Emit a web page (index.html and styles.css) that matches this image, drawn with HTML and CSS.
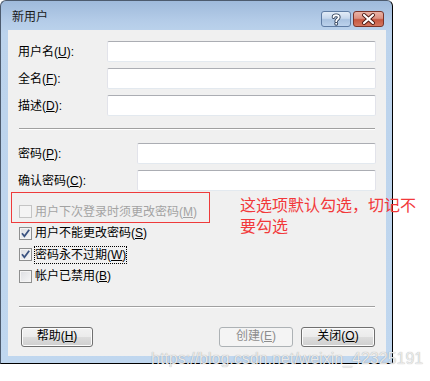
FILE: index.html
```html
<!DOCTYPE html>
<html lang="zh-CN">
<head>
    <meta charset="UTF-8">
    <title>新用户</title>
    <link rel="stylesheet" href="styles.css">
</head>
<body>
    <div class="page">
        <div class="window">
            <!-- Barra de título -->
            <div class="titlebar">
                <span class="title">新用户</span>
                <div class="caption-buttons">
                    <span class="cap-btn help">
                        <svg width="30" height="16" viewBox="0 0 30 16">
                            <path d="M12.5 6.2 C12.5 3.6 17.8 3.6 17.8 6.2 C17.8 8.2 15.2 8.2 15.2 10.2" fill="none" stroke="#2f3f58" stroke-width="3.6" stroke-linecap="round"/>
                            <circle cx="15.2" cy="12.8" r="1.9" fill="#2f3f58"/>
                            <path d="M12.5 6.2 C12.5 3.6 17.8 3.6 17.8 6.2 C17.8 8.2 15.2 8.2 15.2 10.2" fill="none" stroke="#fff" stroke-width="1.8" stroke-linecap="round"/>
                            <circle cx="15.2" cy="12.8" r="1" fill="#fff"/>
                        </svg>
                    </span>
                    <span class="cap-btn close">
                        <svg width="31" height="16" viewBox="0 0 31 16">
                            <path d="M11 4 L20 12 M20 4 L11 12" stroke="#4a1a14" stroke-width="4" stroke-linecap="round"/>
                            <path d="M11 4 L20 12 M20 4 L11 12" stroke="#fff" stroke-width="2.2" stroke-linecap="round"/>
                        </svg>
                    </span>
                </div>
            </div>

            <!-- Área do formulário -->
            <div class="client">
                <div class="field">
                    <label>用户名(<u>U</u>):</label>
                    <span class="input"></span>
                </div>
                <div class="field">
                    <label>全名(<u>F</u>):</label>
                    <span class="input"></span>
                </div>
                <div class="field">
                    <label>描述(<u>D</u>):</label>
                    <span class="input"></span>
                </div>

                <div class="sep"></div>

                <div class="field pw first">
                    <label>密码(<u>P</u>):</label>
                    <span class="input"></span>
                </div>
                <div class="field pw">
                    <label>确认密码(<u>C</u>):</label>
                    <span class="input"></span>
                </div>

                <div class="checks">
                    <div class="check disabled">
                        <span class="box"></span>
                        <span>用户下次登录时须更改密码(<u>M</u>)</span>
                    </div>
                    <div class="check">
                        <span class="box">
                            <svg width="11" height="11" viewBox="0 0 11 11"><path d="M2 5.2 L4.4 8.2 L9.2 1.8" fill="none" stroke="#3b5380" stroke-width="1.8"/></svg>
                        </span>
                        <span>用户不能更改密码(<u>S</u>)</span>
                    </div>
                    <div class="check">
                        <span class="box">
                            <svg width="11" height="11" viewBox="0 0 11 11"><path d="M2 5.2 L4.4 8.2 L9.2 1.8" fill="none" stroke="#3b5380" stroke-width="1.8"/></svg>
                        </span>
                        <span class="focus">密码永不过期(<u>W</u>)</span>
                    </div>
                    <div class="check">
                        <span class="box"></span>
                        <span>帐户已禁用(<u>B</u>)</span>
                    </div>
                </div>

                <div class="sep lower"></div>

                <div class="buttons">
                    <span class="btn">帮助(<u>H</u>)</span>
                    <span class="spacer"></span>
                    <span class="btn wide disabled">创建(<u>E</u>)</span>
                    <span class="btn wide">关闭(<u>O</u>)</span>
                </div>
            </div>
        </div>

        <!-- Anotações por cima da captura -->
        <div class="mark-box"></div>
        <div class="note">这选项默认勾选，切记不<br>要勾选</div>
        <div class="watermark">https://blog.csdn.net/weixin_42325191</div>
    </div>
</body>
</html>
```

FILE: styles.css
```css
body {
    margin: 0;
    background-color: #ffffff;
    font-family: "Liberation Sans", "Noto Sans CJK SC", sans-serif;
    font-size: 12px;
    color: #000;
}

.page {
    position: relative;
    width: 430px;
    height: 381px;
    overflow: hidden;
}

/* Janela */
.window {
    width: 393px;
    height: 364px;
    box-sizing: border-box;
    border: 1px solid #4d5b6e;
    border-right-color: #000;
    border-bottom-color: #000;
    border-radius: 6px 6px 0 0;
    padding: 0 6px 7px 7px;
    background: linear-gradient(#9fbadb 0, #b4cce8 20px, #bcd3ec 32px, #c0d7ef 100%);
    display: flex;
    flex-direction: column;
}

.titlebar {
    height: 29px;
    display: flex;
    justify-content: space-between;
    align-items: flex-start;
    padding-right: 2px;
}

.title {
    margin-top: 8px;
    margin-left: 4px;
    line-height: 16px;
    font-size: 12px;
    color: #1a1a1a;
}

.caption-buttons {
    display: flex;
    gap: 2px;
    margin-top: 10px;
}

.cap-btn {
    display: block;
    height: 16px;
    box-sizing: border-box;
    border-radius: 3px;
    overflow: hidden;
}

.cap-btn svg {
    display: block;
    margin: -1px;
}

.cap-btn.help {
    width: 30px;
    border: 1px solid #5f7ca3;
    background: linear-gradient(#e3ecf7 0, #c6d7ec 45%, #a9c2e0 55%, #bcd2ec 100%);
}

.cap-btn.close {
    width: 31px;
    border: 1px solid #7a3429;
    background: linear-gradient(#eab3a6 0, #dc9181 45%, #c65740 55%, #d4775f 100%);
}

/* Conteúdo */
.client {
    width: 378px;
    height: 326px;
    box-sizing: border-box;
    background-color: #f0f0f0;
    padding: 11px 10px 0 10px;
}

.field {
    display: flex;
    align-items: center;
    height: 21px;
    margin-bottom: 6px;
}

.field label {
    width: 89px;
    flex: none;
    line-height: 16px;
}

.field.pw label {
    width: 119px;
}

.field.pw.first {
    margin-top: 13px;
}

.input {
    flex: 1;
    height: 21px;
    box-sizing: border-box;
    background-color: #fff;
    border: 1px solid #e2e3ea;
    border-top-color: #abadb3;
    border-bottom-color: #e3e9ef;
    border-radius: 2px;
}

.sep {
    height: 1px;
    margin: 12px 1px 0 1px;
    background-color: #a0a0a0;
    border-bottom: 1px solid #fff;
}

.sep.lower {
    margin-top: 19px;
}

/* Caixas de seleção */
.checks {
    margin-top: 10px;
}

.check {
    display: flex;
    align-items: center;
    height: 21.5px;
    line-height: 16px;
}

.box {
    width: 13px;
    height: 13px;
    box-sizing: border-box;
    margin: 0 3px 0 1px;
    border: 1px solid #8e8f8f;
    background: linear-gradient(135deg, #dcdee2 0, #f7f7f7 100%);
    box-shadow: inset 0 0 0 1px #f4f4f4;
    flex: none;
}

.box svg {
    display: block;
}

.check.disabled {
    color: #a3a3a3;
}

.check.disabled .box {
    border-color: #c4c4c4;
    background: #f4f4f4;
}

.focus {
    outline: 1px dotted #000;
    outline-offset: 0;
}

/* Botões */
.buttons {
    display: flex;
    margin: 19px 1px 0 3px;
}

.spacer {
    flex: 1;
}

.btn {
    width: 72px;
    height: 20px;
    box-sizing: border-box;
    border: 1px solid #707070;
    border-radius: 3px;
    background: linear-gradient(#f2f2f2 0, #ebebeb 50%, #dddddd 50%, #cfcfcf 100%);
    box-shadow: inset 0 0 0 1px #fcfcfc;
    text-align: center;
    line-height: 17px;
}

.btn.wide {
    width: 74px;
    margin-left: 8px;
}

.btn.disabled {
    border-color: #adb2b5;
    background: #f4f4f4;
    box-shadow: none;
    color: #8d8d8d;
}

/* Anotações */
.mark-box {
    position: absolute;
    left: 11px;
    top: 192px;
    width: 199px;
    height: 31px;
    box-sizing: border-box;
    border: 1px solid #ee3b3b;
}

.note {
    position: absolute;
    left: 240px;
    top: 195px;
    font-size: 16px;
    line-height: 21px;
    color: #f2383a;
    white-space: nowrap;
}

.watermark {
    position: absolute;
    left: 151px;
    top: 350px;
    font-family: "Liberation Sans", sans-serif;
    font-size: 16px;
    line-height: 18px;
    color: rgba(238, 238, 238, 0.95);
    text-shadow: 0 0 1px rgba(0, 0, 0, 0.35);
    white-space: nowrap;
}
```
